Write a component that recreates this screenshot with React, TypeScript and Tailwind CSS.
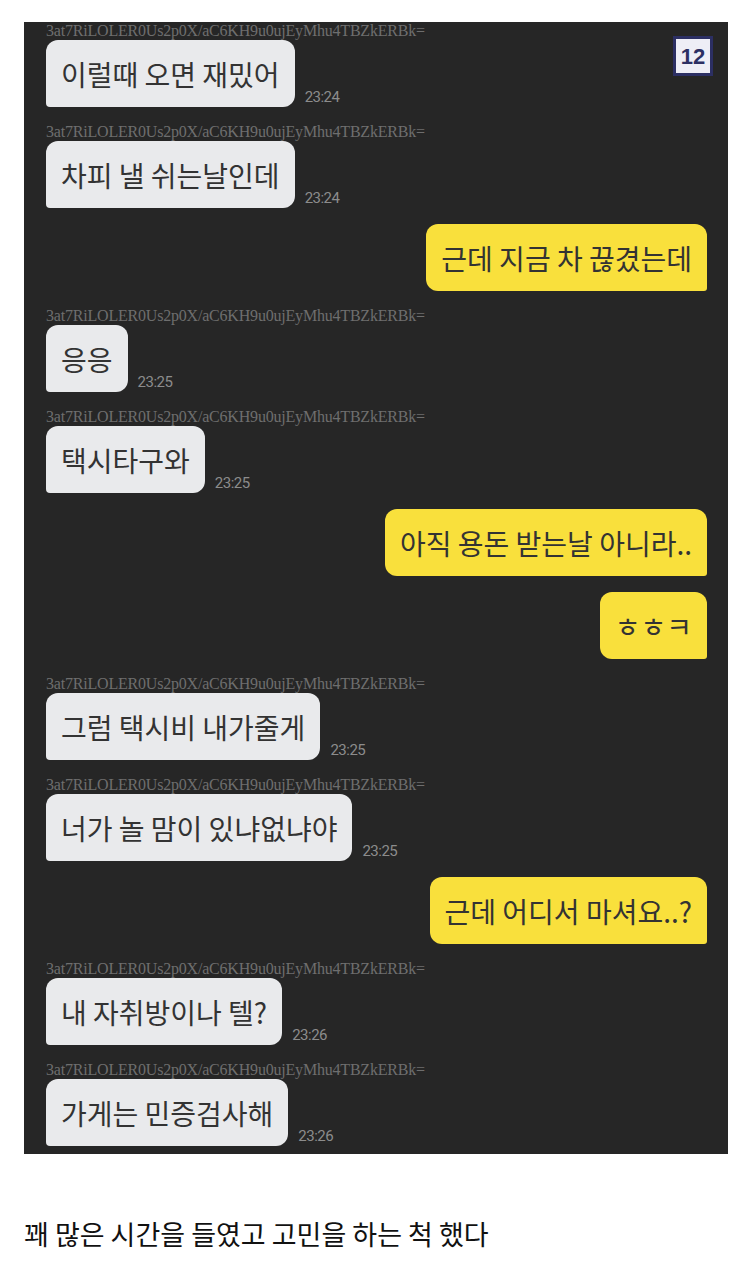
import React from "react";

const WATERMARK = "3at7RiLOLER0Us2p0X/aC6KH9u0ujEyMhu4TBZkERBk=";

type Msg = { me?: boolean; text: string; time?: string };

const messages: Msg[] = [
  { text: "이럴때 오면 재밌어", time: "23:24" },
  { text: "차피 낼 쉬는날인데", time: "23:24" },
  { me: true, text: "근데 지금 차 끊겼는데" },
  { text: "응응", time: "23:25" },
  { text: "택시타구와", time: "23:25" },
  { me: true, text: "아직 용돈 받는날 아니라.." },
  { me: true, text: "ㅎㅎㅋ" },
  { text: "그럼 택시비 내가줄게", time: "23:25" },
  { text: "너가 놀 맘이 있냐없냐야", time: "23:25" },
  { me: true, text: "근데 어디서 마셔요..?" },
  { text: "내 자취방이나 텔?", time: "23:26" },
  { text: "가게는 민증검사해", time: "23:26" },
];

const kr = { fontFamily: '"Noto Sans CJK KR", "Noto Sans", sans-serif' };

function Other({ text, time }: Msg) {
  return (
    <div className="flex flex-col">
      <div
        className="h-[18px] text-[16px] leading-[18px] text-[#6e6e6e] tracking-[-0.2px] whitespace-nowrap"
        style={{ fontFamily: '"Liberation Serif", serif' }}
      >
        {WATERMARK}
      </div>
      <div className="flex items-end">
        <div
          className="h-[67px] flex items-center px-[15px] bg-[#e9eaec] text-[#333] text-[28px] rounded-[12px] rounded-bl-[4px]"
          style={kr}
        >
          {text}
        </div>
        <span
          className="ml-[10px] mb-[2px] text-[15px] leading-[16px] tracking-[-0.5px] text-[#8c8c8c]"
          style={{ fontFamily: "Roboto, sans-serif" }}
        >
          {time}
        </span>
      </div>
    </div>
  );
}

function Mine({ text }: Msg) {
  return (
    <div className="flex justify-end">
      <div
        className="h-[67px] flex items-center px-[15px] bg-[#f9e03c] text-[#333] text-[28px] rounded-[12px] rounded-br-[3px]"
        style={kr}
      >
        {text}
      </div>
    </div>
  );
}

export default function App() {
  return (
    <div className="w-[752px] min-h-[1267px] bg-white">
      <div className="pt-[22px] px-[24px]">
        <div className="relative bg-[#262626] pl-[22px] pr-[21px] pb-[8px] flex flex-col gap-4">
          {messages.map((m, i) =>
            m.me ? <Mine key={i} {...m} /> : <Other key={i} {...m} />
          )}
          <div
            className="absolute top-[14px] right-[15px] w-[40px] h-[40px] border-[3px] border-[#2c2f63] bg-[#eeeef6] flex items-center justify-center text-[22px] font-bold text-[#2c2f63]"
            style={{ fontFamily: '"Liberation Sans", Arial, sans-serif' }}
          >
            12
          </div>
        </div>
      </div>
      <p className="mt-[60px] px-[24px] text-[27px] text-[#111]" style={kr}>
        꽤 많은 시간을 들였고 고민을 하는 척 했다
      </p>
    </div>
  );
}
